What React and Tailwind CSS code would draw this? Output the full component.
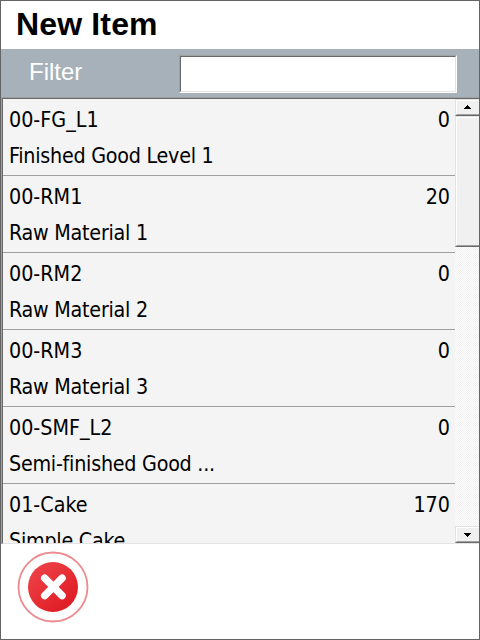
const ITEMS = [
  { code: "00-FG_L1", name: "Finished Good Level 1", qty: 0 },
  { code: "00-RM1", name: "Raw Material 1", qty: 20 },
  { code: "00-RM2", name: "Raw Material 2", qty: 0 },
  { code: "00-RM3", name: "Raw Material 3", qty: 0 },
  { code: "00-SMF_L2", name: "Semi-finished Good ...", qty: 0 },
  { code: "01-Cake", name: "Simple Cake", qty: 170 },
];

// Classic two-tone raised edge shared by the scrollbar arrows and thumb.
function Raised({ className, children }) {
  return (
    <div className={`shrink-0 border-l border-t border-b border-l-[#e3e3e3] border-t-[#e3e3e3] border-b-[#696969] ${className}`}>
      <div className="flex h-full w-full items-center justify-center border-b border-l border-t border-b-[#a0a0a0] border-l-white border-t-white bg-[#f0f0f0]">
        {children}
      </div>
    </div>
  );
}

function Arrow({ down }) {
  return (
    <svg width="7" height="4" viewBox="0 0 7 4" shapeRendering="crispEdges" className={down ? "mr-px mt-px rotate-180" : "mb-px mr-px"}>
      <path d="M3 0h1v1h1v1h1v1h1v1H0V3h1V2h1V1h1z" fill="#000" />
    </svg>
  );
}

function Row({ item }) {
  return (
    <div className="h-[77px] shrink-0 border-b border-[#a0a0a0] pl-[6px] pr-[5px]">
      <div className="flex h-[42px] items-center justify-between">
        <span>{item.code}</span>
        <span>{item.qty}</span>
      </div>
      <div className="flex h-[30px] items-center whitespace-nowrap tracking-[-0.25px]">{item.name}</div>
    </div>
  );
}

export default function App() {
  return (
    <div className="flex h-[640px] w-[480px] flex-col overflow-hidden border border-[#646464] bg-white font-['Liberation_Sans',Arial,sans-serif] text-black">
      <header className="flex h-12 shrink-0 items-center pb-[2px] pl-[15px]">
        <h1 className="text-[32px] font-bold leading-none tracking-[0.15px]">New Item</h1>
      </header>

      <div className="flex h-12 shrink-0 items-start justify-between bg-[#a6b1ba] pl-7 pr-[22px] pt-[6px]">
        <label className="pt-[5px] text-2xl leading-6 text-white">Filter</label>
        <div className="h-[38px] w-[278px] border border-b-white border-l-[#a0a0a0] border-r-white border-t-[#a0a0a0]">
          <div className="h-full border border-b-[#e3e3e3] border-l-[#696969] border-r-[#e3e3e3] border-t-[#696969] bg-white" />
        </div>
      </div>

      <div className="h-[447px] shrink-0 border-l border-t border-[#a0a0a0]">
        <div className="flex h-full border-b border-l border-t border-b-[#e3e3e3] border-l-[#696969] border-t-[#696969]">
          <div className="flex w-[452px] flex-col overflow-hidden bg-[#f4f4f4] font-['DejaVu_Sans_Condensed','DejaVu_Sans',sans-serif] text-[21.3px] leading-8">
            {ITEMS.map((item) => (
              <Row key={item.code} item={item} />
            ))}
          </div>
          <div className="flex flex-1 flex-col bg-[#f8f8f8] bg-[conic-gradient(#fff_25%,#f0f0f0_0_50%,#fff_0_75%,#f0f0f0_0)] bg-[length:2px_2px]">
            <Raised className="h-[17px]"><Arrow /></Raised>
            <Raised className="h-[131px]" />
            <div className="flex-1" />
            <Raised className="h-[17px]"><Arrow down /></Raised>
          </div>
        </div>
      </div>

      <footer className="flex flex-1 items-start pl-4 pt-[7px]">
        <button aria-label="Cancel">
          <svg width="72" height="72" viewBox="0 0 72 72" fill="none">
            <defs>
              <linearGradient id="cancel" x1="16" y1="14" x2="54" y2="58" gradientUnits="userSpaceOnUse">
                <stop stopColor="#ee4349" />
                <stop offset="1" stopColor="#de1a22" />
              </linearGradient>
            </defs>
            <circle cx="36" cy="36" r="34.5" stroke="#ec8b8f" strokeWidth="1.8" />
            <circle cx="36" cy="36" r="25" fill="url(#cancel)" />
            <path d="M27.7 27.2l17.4 17.4M45.1 27.2l-17.4 17.4" stroke="#fff" strokeWidth="7.4" strokeLinecap="round" />
          </svg>
        </button>
      </footer>
    </div>
  );
}
